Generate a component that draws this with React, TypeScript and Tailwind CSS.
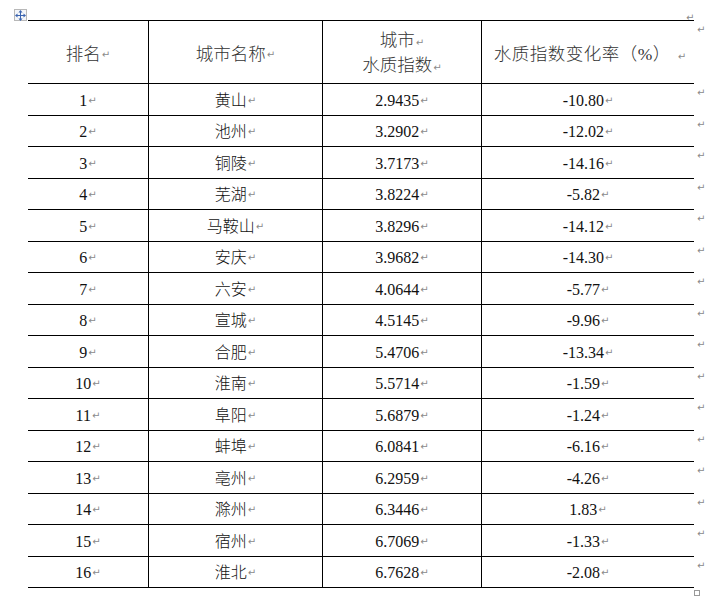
import React from "react";

const rows: [string, string, string, string][] = [
  ["1", "黄山", "2.9435", "-10.80"],
  ["2", "池州", "3.2902", "-12.02"],
  ["3", "铜陵", "3.7173", "-14.16"],
  ["4", "芜湖", "3.8224", "-5.82"],
  ["5", "马鞍山", "3.8296", "-14.12"],
  ["6", "安庆", "3.9682", "-14.30"],
  ["7", "六安", "4.0644", "-5.77"],
  ["8", "宣城", "4.5145", "-9.96"],
  ["9", "合肥", "5.4706", "-13.34"],
  ["10", "淮南", "5.5714", "-1.59"],
  ["11", "阜阳", "5.6879", "-1.24"],
  ["12", "蚌埠", "6.0841", "-6.16"],
  ["13", "亳州", "6.2959", "-4.26"],
  ["14", "滁州", "6.3446", "1.83"],
  ["15", "宿州", "6.7069", "-1.33"],
  ["16", "淮北", "6.7628", "-2.08"],
];

function Mark() {
  return (
    <span className="ml-[1px] text-[10px] leading-none font-normal text-[#8a8a8a] [font-family:'DejaVu_Sans',sans-serif]">
      ↵
    </span>
  );
}

function MoveHandle() {
  return (
    <div className="absolute left-[14px] top-[9px] flex h-[12px] w-[13px] items-center justify-center border border-[#b8b8b8] bg-[#f4f6f9]">
      <svg width="11" height="11" viewBox="0 0 11 11">
        <g stroke="#3b64b0" strokeWidth="1" fill="none">
          <line x1="5.5" y1="1.5" x2="5.5" y2="9.5" />
          <line x1="1.5" y1="5.5" x2="9.5" y2="5.5" />
        </g>
        <g fill="#3b64b0">
          <polygon points="5.5,0 3.5,2.5 7.5,2.5" />
          <polygon points="5.5,11 3.5,8.5 7.5,8.5" />
          <polygon points="0,5.5 2.5,3.5 2.5,7.5" />
          <polygon points="11,5.5 8.5,3.5 8.5,7.5" />
        </g>
      </svg>
    </div>
  );
}

export default function App() {
  const cell =
    "flex items-center justify-center border-b border-black text-[#111]";
  return (
    <div className="relative h-[597px] w-[726px] bg-white [font-family:'Liberation_Serif','Noto_Sans_CJK_SC',serif]">
      <MoveHandle />
      <div className="absolute left-[685px] top-[4px]">
        <Mark />
      </div>
      <div className="pl-[28px] pt-[20px]">
        <div className="grid grid-cols-[121px_174px_159px_212px_32px]">
          {/* header */}
          <div className={`${cell} h-[64px] border-t border-r pt-[5px] text-[17.5px] font-light text-[#333]`}>
            <span>排名</span>
            <Mark />
          </div>
          <div className={`${cell} h-[64px] border-t border-r pt-[5px] text-[17.5px] font-light text-[#333]`}>
            <span>城市名称</span>
            <Mark />
          </div>
          <div className={`${cell} h-[64px] flex-col border-t border-r pt-[2px] text-[17.5px] font-light leading-[25px] text-[#333]`}>
            <div>
              城市
              <Mark />
            </div>
            <div>
              水质指数
              <Mark />
            </div>
          </div>
          <div className={`${cell} h-[64px] border-t pt-[5px] pl-[4px] text-[17.5px] font-light text-[#333]`}>
            <span className="tracking-[0.5px]">水质指数变化率（%）</span>
            <span className="ml-[6px]">
              <Mark />
            </span>
          </div>
          <div className="flex h-[64px] items-start pl-[2px] pt-[5px]">
            <Mark />
          </div>

          {rows.map((r, i) => (
            <React.Fragment key={i}>
              <div className={`${cell} h-[31.5px] border-r pt-[3px] text-[16px]`}>
                <span>{r[0]}</span>
                <Mark />
              </div>
              <div className={`${cell} h-[31.5px] border-r pt-[3px] text-[16px] font-light`}>
                <span>{r[1]}</span>
                <Mark />
              </div>
              <div className={`${cell} h-[31.5px] border-r pt-[3px] text-[16px]`}>
                <span>{r[2]}</span>
                <Mark />
              </div>
              <div className={`${cell} h-[31.5px] pt-[3px] text-[16px]`}>
                <span>{r[3]}</span>
                <Mark />
              </div>
              <div className="flex h-[31.5px] items-start pl-[2px] pt-[4px]">
                <Mark />
              </div>
            </React.Fragment>
          ))}
          <div className="col-span-4 flex justify-end">
            <div className="-mr-[6px] mt-[2px] h-[6px] w-[6px] border border-[#999]" />
          </div>
        </div>
      </div>
    </div>
  );
}
